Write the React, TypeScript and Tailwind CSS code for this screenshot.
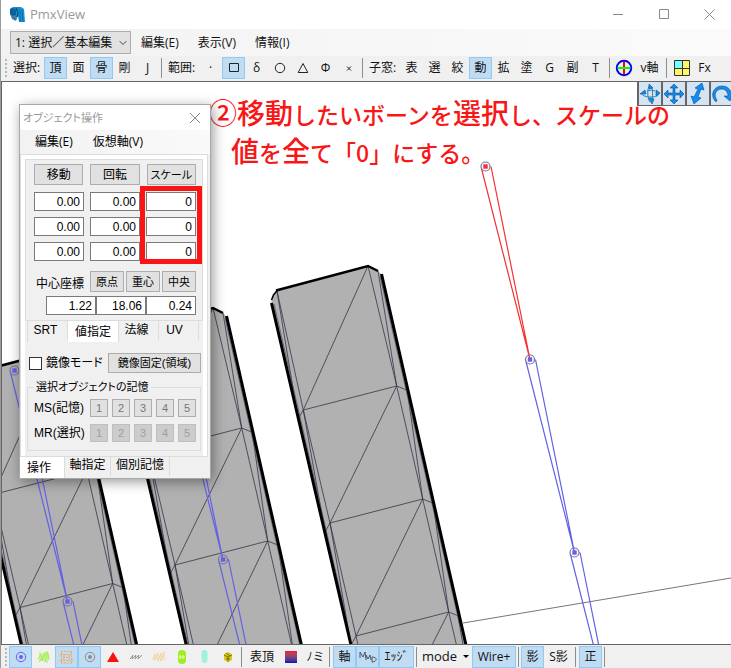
import type { ReactNode } from "react";
import { ChevronDown } from "lucide-react";

const uiFont = "font-['Open_Sans','Noto_Sans_CJK_JP',sans-serif]";
const panelFont = "font-['Liberation_Sans','Noto_Sans_CJK_JP',sans-serif]";

function Tool({ children, active, wide, label }: { children: ReactNode; active?: boolean; wide?: string; label?: string }) {
  return (
    <button
      aria-label={label}
      aria-pressed={!!active}
      className={`flex h-[22px] shrink-0 items-center justify-center border ${wide ?? "w-[23px]"} ${
        active ? "border-[#90c8f6] bg-[#c0dcf3]" : "border-transparent"
      }`}
    >
      {children}
    </button>
  );
}

function Sep({ className = "mx-1" }: { className?: string }) {
  return <div className={`h-5 w-px shrink-0 bg-[#8d8d8d] ${className}`} />;
}

function Grip() {
  return <div className="ml-1 mr-0.5 h-[18px] w-0 shrink-0 border-l-2 border-dotted border-[#b8b8b8]" />;
}

function Logo() {
  return (
    <svg width="17" height="16" viewBox="0 0 17 16">
      <path d="M1 2l3-2h8l3 2 1 13h-6l-1-6-2 5-4-2-2-5z" fill="#1593d2" />
      <path d="M1 2l3-1 3 2v5L4 9 1 7z" fill="#0d5d90" />
      <path d="M2 3l3 1v3M10 2l1 3v10M13 3l1 12" stroke="#0a6aa6" fill="none" />
      <path d="M7 1l2 5-1 4" stroke="#083c62" fill="none" />
      <path d="M3 10l3 3 1-2" fill="#a8442c" />
    </svg>
  );
}

function TitleBar() {
  return (
    <header className="flex h-[29px] shrink-0 items-center bg-white pl-2">
      <Logo />
      <h1 className="ml-1 text-[13px] font-normal leading-none text-[#999]">PmxView</h1>
      <div className="ml-auto flex text-[#888]">
        <button aria-label="最小化" className="flex h-7 w-[46px] items-center justify-center">
          <svg width="11" height="11" stroke="currentColor"><path d="M0 5.5h10" /></svg>
        </button>
        <button aria-label="最大化" className="flex h-7 w-[46px] items-center justify-center">
          <svg width="11" height="11" stroke="currentColor" fill="none"><path d="M.5.5h9v9H.5z" /></svg>
        </button>
        <button aria-label="閉じる" className="flex h-7 w-[44px] items-center justify-center">
          <svg width="11" height="11" stroke="currentColor"><path d="M.5.5l10 10M10.5.5l-10 10" /></svg>
        </button>
      </div>
    </header>
  );
}

function MenuBar() {
  return (
    <nav className="flex h-[27px] shrink-0 items-center bg-linear-to-r from-[#f2f2f2] to-[#fbfbfb] pl-[9px] text-xs">
      <div className="relative">
        <select
          aria-label="モード"
          className="h-[23px] w-[121px] appearance-none border border-[#adadad] bg-[#e1e1e1] pl-1 text-xs leading-5"
        >
          <option>1: 選択／基本編集</option>
        </select>
        <ChevronDown size={12} strokeWidth={2} className="pointer-events-none absolute right-0.5 top-1.5 text-[#444]" />
      </div>
      <button className="ml-2.5">編集(E)</button>
      <button className="ml-[19px]">表示(V)</button>
      <button className="ml-[19px]">情報(I)</button>
    </nav>
  );
}

function Shape({ children }: { children: ReactNode }) {
  return <svg width="12" height="12" viewBox="0 0 12 12" fill="none" stroke="#222">{children}</svg>;
}

function ToolBar() {
  return (
    <div role="toolbar" className="flex h-[25px] shrink-0 items-center overflow-hidden bg-[#f0f0f0] pb-px text-xs">
      <Grip />
      <span className="w-[35px] shrink-0 pl-1">選択:</span>
      <Tool active>頂</Tool>
      <Tool>面</Tool>
      <Tool active>骨</Tool>
      <Tool>剛</Tool>
      <Tool>J</Tool>
      <Sep className="mr-1.5 ml-0.5" />
      <span className="w-[31px] shrink-0">範囲:</span>
      <Tool>·</Tool>
      <Tool active label="矩形"><Shape><path d="M1.500 1.500h9v8h-9z" /></Shape></Tool>
      <Tool>δ</Tool>
      <Tool label="円"><Shape><circle cx="6" cy="6" r="4.700" /></Shape></Tool>
      <Tool label="三角"><Shape><path d="M6 1.500l4.800 9H1.200z" /></Shape></Tool>
      <Tool>Φ</Tool>
      <Tool label="解除"><Shape><path d="M4 4.500l4 4M8 4.500l-4 4" /></Shape></Tool>
      <Sep className="mr-1.5 ml-0.5" />
      <span className="w-[31px] shrink-0">子窓:</span>
      <Tool>表</Tool>
      <Tool>選</Tool>
      <Tool>絞</Tool>
      <Tool active>動</Tool>
      <Tool>拡</Tool>
      <Tool>塗</Tool>
      <Tool>G</Tool>
      <Tool>副</Tool>
      <Tool>T</Tool>
      <Sep className="mr-0.5 ml-0.5" />
      <Tool label="軸表示">
        <svg width="18" height="18" viewBox="0 0 18 18" fill="none" className="shrink-0">
          <circle cx="9" cy="9" r="7.200" stroke="#0000f0" strokeWidth="2" />
          <path d="M9 2.500v13" stroke="#f00" strokeWidth="2" />
          <path d="M2.500 9h13" stroke="#0f0" strokeWidth="2" />
        </svg>
      </Tool>
      <Tool wide="w-[29px]">v軸</Tool>
      <Sep className="ml-0.5 mr-[3px]" />
      <Tool label="画面分割">
        <svg width="16" height="16" viewBox="0 0 16 16" className="shrink-0">
          <path d="M0 0h16v16H0z" fill="#fff566" />
          <path d="M0 0h8v8H0z" fill="#7ff" />
          <path d="M.5.5h15v15H.5zM8.500 0v16M0 8.500h16" fill="none" stroke="#333" />
        </svg>
      </Tool>
      <Tool>Fx</Tool>
    </div>
  );
}

function Bone({ x, y, dx, dy, color }: { x: number; y: number; dx: number; dy: number; color: string }) {
  return (
    <g fill="none" stroke={color} strokeWidth="1.2">
      <path d={`M${x - 4} ${y + 2}L${x + dx} ${y + dy}L${x + 5.5} ${y}`} />
      <circle cx={x} cy={y} r="4.500" stroke="#77709a" />
      <rect x={x - 2.2} y={y - 2.2} width="4.400" height="4.400" fill={color} stroke="none" />
    </g>
  );
}

function Strip({ dx, dy }: { dx: number; dy: number }) {
  return (
    <g transform={`translate(${dx} ${dy})`}>
      <path d="M277 290L368 266 378 271 382 275 466 645H350L271 303 273 296z" fill="#b1b1b1" />
      <g fill="none" stroke="#35334a" strokeWidth=".8">
        <path d="M277 291L303.300 410 330 523 356 636 358 645M277 291L298 419M303.300 410L325 532M330 523L351 645" />
        <path d="M368 266L396.700 386 422.700 499 448.700 612 456.500 645M378 271L396.700 386M407 389L422.700 499M433 503L448.700 612M458 616L463 645" />
        <path d="M298 419l5.300-9L396.700 386l10 4M325 532l5-9L422.700 499l10 4M351 645l5-9L448.700 612l10 4" />
        <path d="M368 266L303.300 410M396.700 386L330 523M422.700 499L356 636M448.700 612L432 645" />
        <path d="M380 276L460 626M274 304L345 612" stroke="#555366" />
      </g>
      <g fill="none" stroke="#000" strokeWidth="3">
        <path d="M381.500 274L466 645M271.500 303L351 645" />
        <path d="M271.500 300l2-5 4-5" strokeWidth="1.500" />
        <path d="M276 290.500L368 266l10 5" strokeWidth="2.500" />
      </g>
    </g>
  );
}

function Scene() {
  return (
    <svg
      viewBox="2 82 729 562"
      preserveAspectRatio="xMinYMin slice"
      className="absolute inset-0 h-full w-full"
      aria-label="モデル表示"
    >
      <path d="M463 623L731 578" stroke="#777" />
      <Strip dx={-310} dy={84.5} />
      <Strip dx={-155} dy={42} />
      <Strip dx={0} dy={0} />
      <Bone x={14.5} y={370.5} dx={53} dy={231} color="#6262e6" />
      <Bone x={67.500} y={601.5} dx={53} dy={231} color="#6262e6" />
      <Bone x={170} y={329} dx={53} dy={231} color="#6262e6" />
      <Bone x={223} y={559.5} dx={53} dy={231} color="#6262e6" />
      <Bone x={485.5} y={166.5} dx={44.5} dy={193} color="#f43030" />
      <Bone x={530} y={359.5} dx={44.5} dy={193} color="#6262e6" />
      <Bone x={574.5} y={552.5} dx={44.5} dy={193} color="#6262e6" />
    </svg>
  );
}

function NavButton({ children, label }: { children: ReactNode; label: string }) {
  return (
    <button aria-label={label} className="h-6 w-6 shrink-0 border-b border-l-2 border-[#666] bg-[#d5e4f2]">
      <svg width="22" height="22" viewBox="0 0 22 22" fill="#0f8cf5" stroke="#0b4f8c" strokeWidth=".6">{children}</svg>
    </button>
  );
}

function NavButtons() {
  return (
    <div className="absolute right-0 top-0 flex w-[94px] overflow-hidden">
      <NavButton label="回転">
        <path d="M11 2c-3 3-3 13 0 17M12 3c2 3 2 9 1 13M4 9c-3 3 2 5 8 5s9-2 7-4M8 8c3-1 6-1 8 0" fill="none" stroke="#2a7fb8" strokeWidth="1" />
        <path d="M10 1l4 4-4 1zM1 11l5-4 1 4zM17 7l4 3-4 3zM10 15l5 1-2 5z" />
      </NavButton>
      <NavButton label="移動">
        <path d="M11 1l4 4h-3v5h5V7l4 4-4 4v-3h-5v5h3l-4 4-4-4h3v-5H5v3l-4-4 4-4v3h5V5H7z" />
      </NavButton>
      <NavButton label="拡大">
        <path d="M15 0l2 7-3-1-3 8 3 1-7 6-3-8 3 1 4-8-3-1z" />
      </NavButton>
      <NavButton label="傾き">
        <path d="M5 19C-2 12 3 3 11 3c6 0 9 4 9 8h2l-3 7-6-5h4c0-4-3-7-6-7-6 0-9 6-5 11z" />
      </NavButton>
    </div>
  );
}

function Annotation() {
  return (
    <p className="absolute left-[207px] top-3 whitespace-nowrap font-['Noto_Sans_CJK_JP',sans-serif] text-[23px] font-medium leading-9 text-[#f81616]">
      <span className="text-[28px]">②移動</span>したいボーンを<span className="text-[28px]">選択</span>し、スケールの
      <br />
      <span className="ml-[22px] text-[28px]">値</span>を<span className="text-[28px]">全</span>て「0」にする。
    </p>
  );
}

function Btn({ children, className }: { children: ReactNode; className: string }) {
  return (
    <button className={`flex items-center justify-center whitespace-nowrap border border-[#adadad] bg-[#e1e1e1] ${className}`}>
      {children}
    </button>
  );
}

function Num({ value, label }: { value: string; label: string }) {
  return (
    <input
      aria-label={label}
      defaultValue={value}
      className="h-[19px] w-full min-w-0 border border-[#7a7a7a] bg-white pr-[3px] text-right text-xs leading-none"
    />
  );
}

function Tab({ children, active, className }: { children: ReactNode; active?: boolean; className: string }) {
  return (
    <button
      role="tab"
      aria-selected={!!active}
      className={`flex justify-center whitespace-nowrap border-r border-[#dcdcdc] ${
        active ? "h-[21px] items-center bg-white" : "h-[19px] items-start"
      } ${className}`}
    >
      {children}
    </button>
  );
}

const axes = ["X", "Y", "Z"];
const slots = ["1", "2", "3", "4", "5"];

function ObjectPanel() {
  return (
    <section
      className={`absolute left-[17px] top-[22px] w-[192px] border border-[#a8a8a8] bg-[#f0f0f0] text-xs leading-4 text-black shadow-[2px_3px_12px_rgba(0,0,0,0.4)] [font-feature-settings:'palt'] ${panelFont}`}
    >
      <div className="flex h-[25px] items-center justify-between bg-white pl-[3px] pr-[9px] text-[#999]">
        <h2 className="text-[11px] font-normal">オブジェクト操作</h2>
        <button aria-label="パネルを閉じる">
          <svg width="12" height="12" stroke="#888"><path d="M1 1l10 10M11 1L1 11" /></svg>
        </button>
      </div>
      <div className={`flex h-6 items-center gap-5 bg-linear-to-r from-[#f2f2f2] to-[#fafafa] pl-[15px] ${uiFont}`}>
        <button>編集(E)</button>
        <button>仮想軸(V)</button>
      </div>

      <div className="mr-0.5 border border-[#dcdcdc] bg-white px-1 pt-1">
        <div className="bg-[#f0f0f0]">
          <div className="border border-[#dcdcdc] pb-[5px] pl-2 pr-1.5 pt-1">
            <div className="relative">
              <div className="mb-[7px] grid grid-cols-3 gap-[7px]">
                <Btn className="h-[21px]">移動</Btn>
                <Btn className="h-[21px]">回転</Btn>
                <Btn className="h-[21px] text-[11px]">スケール</Btn>
              </div>
              <div className="grid grid-cols-3 gap-x-1.5 gap-y-1.5">
                {axes.map((a) => [
                  <Num key={"m" + a} label={"移動" + a} value="0.00" />,
                  <Num key={"r" + a} label={"回転" + a} value="0.00" />,
                  <Num key={"s" + a} label={"スケール" + a} value="0" />,
                ])}
              </div>
              <div className="pointer-events-none absolute -bottom-[3px] -right-1.5 h-[78px] w-[62px] border-[5px] border-[#fc1414]" />
            </div>
            <div className="mt-2.5 flex items-end justify-between">
              <span className="pl-0.5">中心座標</span>
              <div className="flex gap-0.5 text-[11px]">
                <Btn className="h-[21px] w-[34px]">原点</Btn>
                <Btn className="h-[21px] w-[34px]">重心</Btn>
                <Btn className="h-[21px] w-[34px]">中央</Btn>
              </div>
            </div>
            <div className="ml-3 mt-1 flex">
              <Num label="中心X" value="1.22" />
              <Num label="中心Y" value="18.06" />
              <Num label="中心Z" value="0.24" />
            </div>
          </div>

          <div role="tablist" className="ml-0.5 flex border-l border-[#dcdcdc]">
            <Tab className="w-10 pr-1 pt-px">SRT</Tab>
            <Tab active className="w-[51px]">値指定</Tab>
            <Tab className="w-10 pr-1 pt-px">法線</Tab>
            <Tab className="w-10 pr-2 pt-px">UV</Tab>
          </div>

          <div className="mr-0.5 mt-[11px] flex items-center justify-between pl-1">
            <label className="flex items-center gap-1 whitespace-nowrap">
              <input type="checkbox" className="h-[13px] w-[13px] appearance-none border border-[#333] bg-white" />
              鏡像モード
            </label>
            <Btn className="h-5 w-[93px] text-[11px]">鏡像固定(領域)</Btn>
          </div>

          <fieldset className="mx-0.5 mt-1.5 border border-[#dcdcdc] pb-2 pl-1.5 pr-1">
            <legend className="whitespace-nowrap px-0.5 text-[11px] leading-4">選択オブジェクトの記憶</legend>
            <div className="mt-1 flex items-center justify-between">
              <span>MS(記憶)</span>
              <div className="flex gap-1 text-[11px] text-[#777]">
                {slots.map((n) => <Btn key={n} className="h-[18px] w-[18px]">{n}</Btn>)}
              </div>
            </div>
            <div className="mt-[7px] flex items-center justify-between">
              <span>MR(選択)</span>
              <div className="flex gap-1 text-[11px]">
                {slots.map((n) => (
                  <button key={n} disabled className="h-[18px] w-[18px] border border-[#bfbfbf] bg-[#ccc] leading-4 text-[#9f9f9f]">{n}</button>
                ))}
              </div>
            </div>
          </fieldset>
          <div className="h-[5px]" />
        </div>
      </div>
      <div role="tablist" className="flex">
        <Tab active className="w-[45px] pr-1.5">操作</Tab>
        <Tab className="w-[46px]">軸指定</Tab>
        <Tab className="w-[59px]">個別記憶</Tab>
      </div>
    </section>
  );
}

function Ring({ color }: { color: string }) {
  return (
    <svg width="12" height="12" viewBox="0 0 12 12">
      <circle cx="6" cy="6" r="4.700" fill="none" stroke={color} />
      <circle cx="6" cy="6" r="2" fill={color} />
    </svg>
  );
}

function StatusBar() {
  return (
    <footer role="toolbar" className="flex h-6 shrink-0 items-center overflow-hidden border-t border-[#666] bg-[#f0f0f0] text-xs">
      <Grip />
      <Tool active label="ボーン"><Ring color="#6262e6" /></Tool>
      <Tool label="頂点">
        <svg width="14" height="14" fill="none" stroke="#a5f04a"><path d="M1 9l3-5 1 7 3-9v10l3-9 1 7M3 2v9M10 1v12M6 3v8M2 12l9-10" /></svg>
      </Tool>
      <Tool active label="面">
        <svg width="15" height="14" fill="none" stroke="#f5a860" strokeDasharray="2 1"><path d="M2 1.500h11M1 4.500h12M4 7.500h7M1 10.500h13M2 13h11M2.500 2v12M12.500 2v12M5 5v5M10 5v5" /></svg>
      </Tool>
      <Tool active label="中心点"><Ring color="#8b8b8b" /></Tool>
      <Tool label="三角面"><svg width="12" height="10"><path d="M6 0l6 10H0z" fill="#fa1010" /></svg></Tool>
      <Tool label="辺"><svg width="14" height="8" fill="none" stroke="#999"><path d="M1 6l3-4-1 4 4-4-1 4 4-4-1 4 4-4" /></svg></Tool>
      <Tool label="法線"><svg width="13" height="11" fill="none" stroke="#f3cd84"><path d="M1 9l2-6v6l3-7v8l3-8v8l3-9v8" strokeWidth=".8" /></svg></Tool>
      <Tool label="剛体">
        <svg width="8" height="14"><rect width="8" height="14" rx="4" fill="#9eee22" /><path d="M1 7h6M2 5v4M5 5v4" stroke="#eaffc0" /></svg>
      </Tool>
      <Tool label="Joint"><svg width="7" height="13"><rect x=".5" width="6" height="13" rx="3" fill="#a2f0de" /></svg></Tool>
      <Tool label="SoftBody">
        <svg width="10" height="10"><path d="M1 2l4-2 4 2v6l-4 2-4-2z" fill="#d8cc18" /><path d="M1 3l4 2 4-2M5 5v5M3 1l4 3M3 7h4" fill="none" stroke="#625b06" strokeWidth=".8" /></svg>
      </Tool>
      <Sep className="ml-0.5 mr-1" />
      <Tool wide="w-8">表頂</Tool>
      <Tool wide="w-[26px]" label="色">
        <span className="h-3 w-3 bg-linear-to-b from-[#f01420] to-[#1408b0]" />
      </Tool>
      <Tool>ﾉミ</Tool>
      <Sep className="ml-0.5 mr-[3px]" />
      <Tool active>軸</Tool>
      <Tool active label="MMD">
        <svg width="18" height="14" viewBox="0 0 18 14" fill="none" stroke="#4a5a68" className="shrink-0">
          <path d="M1 8V2l3 5 2-5 1 6M7 10V5l2 4 2-4 1 5M13 12V7c6 0 5 5 0 5" />
        </svg>
      </Tool>
      <Tool active wide="w-[35px]">ｴｯｼﾞ</Tool>
      <Sep className="mx-0.5" />
      <Tool wide="w-[53px]">
        <span className="text-[13px]">mode</span>
        <span className="ml-1.5 border-x-[3px] border-t-[3px] border-x-transparent border-t-black" />
      </Tool>
      <Tool active wide="w-11">Wire+</Tool>
      <Sep className="mx-0.5" />
      <Tool active>影</Tool>
      <Tool wide="w-[29px]">S影</Tool>
      <Sep className="ml-0.5 mr-[3px]" />
      <Tool active>正</Tool>
      <Sep className="mx-0.5" />
    </footer>
  );
}

export default function App() {
  return (
    <main className={`flex h-screen flex-col overflow-hidden border-l border-[#9a9a9a] bg-white text-[#111] ${uiFont}`}>
      <TitleBar />
      <MenuBar />
      <ToolBar />
      <div className="relative min-h-0 flex-1 overflow-hidden border-l border-t border-[#666] bg-white">
        <Scene />
        <Annotation />
        <NavButtons />
        <ObjectPanel />
      </div>
      <StatusBar />
    </main>
  );
}
